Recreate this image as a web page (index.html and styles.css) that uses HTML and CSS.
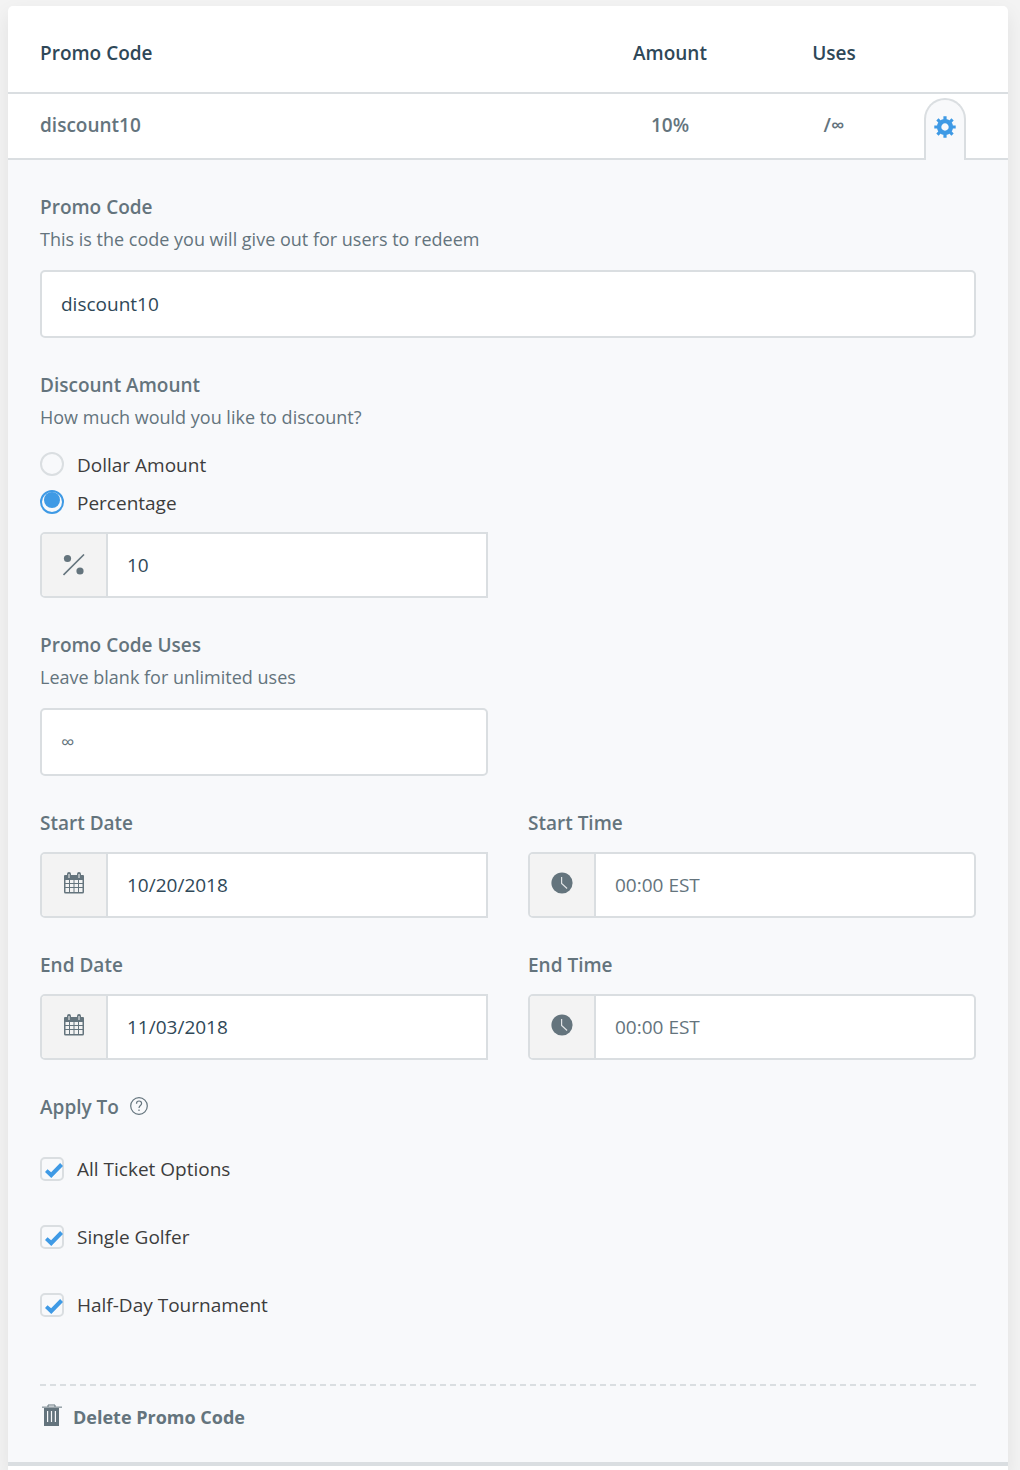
FILE: index.html
```html
<!DOCTYPE html>
<html lang="en">
<head>
    <meta charset="UTF-8">
    <meta name="viewport" content="width=device-width, initial-scale=1.0">
    <title>Promo Codes</title>
    <link rel="stylesheet" href="styles.css">
</head>
<body>
  <!-- Shared icons -->
  <svg class="sprite" aria-hidden="true">
    <symbol id="icon-calendar" viewBox="0 0 22 22">
      <path fill="currentColor" fill-rule="evenodd" d="M2 3h2v-1a2 2 0 0 1 4 0v1h6v-1a2 2 0 0 1 4 0v1h2a1 1 0 0 1 1 1v16a1.500 1.500 0 0 1-1.500 1.500h-17a1.500 1.500 0 0 1-1.500-1.500v-16a1 1 0 0 1 1-1zM5.500 2v4h1v-4zM15.500 2v4h1v-4zM2.500 8v3h3.500v-3zM7 8v3h3.500v-3zM11.500 8v3h3.500v-3zM16 8v3h3.500v-3zM2.500 12v3h3.500v-3zM7 12v3h3.500v-3zM11.500 12v3h3.500v-3zM16 12v3h3.500v-3zM2.500 16v4h3.500v-4zM7 16v4h3.500v-4zM11.500 16v4h3.500v-4zM16 16v4h3.500v-4z"/>
    </symbol>
    <symbol id="icon-clock" viewBox="0 0 22 22">
      <circle cx="11" cy="11" r="10.600" fill="currentColor"/>
      <path d="M10.600 5v6.500l5.500 5" fill="none" stroke="#dfe2e4" stroke-width="1.200"/>
    </symbol>
  </svg>

  <div class="card">
    <table class="promo-table">
      <thead>
        <tr>
          <th class="col-code" scope="col">Promo Code</th>
          <th class="col-amount" scope="col">Amount</th>
          <th class="col-uses" scope="col">Uses</th>
          <td class="col-edit"></td>
        </tr>
      </thead>
      <tbody>
        <tr>
          <td class="col-code">discount10</td>
          <td class="col-amount">10%</td>
          <td class="col-uses">/∞</td>
          <td class="col-edit">
            <button type="button" class="tab-btn" aria-label="Edit promo code" aria-expanded="true">
              <svg width="22" height="22" viewBox="-11 -11 22 22">
                <g stroke="currentColor" stroke-width="3.200">
                  <path d="M0-10.700V-6M0 6V10.700M-10.700 0H-6M6 0H10.700"/>
                  <path transform="rotate(45)" d="M0-10.700V-6M0 6V10.700M-10.700 0H-6M6 0H10.700"/>
                </g>
                <circle r="5.900" fill="none" stroke="currentColor" stroke-width="4.400"/>
              </svg>
            </button>
          </td>
        </tr>
      </tbody>
    </table>

    <form class="panel">
      <div class="field">
        <label class="title" for="code">Promo Code</label>
        <p class="hint">This is the code you will give out for users to redeem</p>
        <input class="text-input" type="text" id="code" value="discount10">
      </div>

      <div class="row">
        <div class="field">
          <label class="title" for="amount">Discount Amount</label>
          <p class="hint">How much would you like to discount?</p>
          <div class="radios">
            <label class="option"><input type="radio" name="type"> Dollar Amount</label>
            <label class="option"><input type="radio" name="type" checked> Percentage</label>
          </div>
          <div class="input-group square">
            <span class="addon">
              <svg width="22" height="22" viewBox="0 0 22 22">
                <circle cx="4.500" cy="4.500" r="3.600" fill="currentColor"/>
                <circle cx="17" cy="17" r="3.600" fill="currentColor"/>
                <path d="M.5 21L21 .5" stroke="currentColor" stroke-width="1.600"/>
              </svg>
            </span>
            <input type="text" id="amount" value="10">
          </div>
        </div>
      </div>

      <div class="row">
        <div class="field">
          <label class="title" for="uses">Promo Code Uses</label>
          <p class="hint">Leave blank for unlimited uses</p>
          <input class="text-input" type="text" id="uses" placeholder="∞">
        </div>
      </div>

      <div class="row">
        <div class="field">
          <label class="title" for="startDate">Start Date</label>
          <div class="input-group square">
            <span class="addon"><svg class="icon-up" width="22" height="22"><use href="#icon-calendar"/></svg></span>
            <input type="text" id="startDate" value="10/20/2018">
          </div>
        </div>
        <div class="field">
          <label class="title" for="startTime">Start Time</label>
          <div class="input-group">
            <span class="addon"><svg class="icon-up" width="22" height="22"><use href="#icon-clock"/></svg></span>
            <input type="text" id="startTime" placeholder="00:00 EST">
          </div>
        </div>
      </div>

      <div class="row">
        <div class="field">
          <label class="title" for="endDate">End Date</label>
          <div class="input-group square">
            <span class="addon"><svg class="icon-up" width="22" height="22"><use href="#icon-calendar"/></svg></span>
            <input type="text" id="endDate" value="11/03/2018">
          </div>
        </div>
        <div class="field">
          <label class="title" for="endTime">End Time</label>
          <div class="input-group">
            <span class="addon"><svg class="icon-up" width="22" height="22"><use href="#icon-clock"/></svg></span>
            <input type="text" id="endTime" placeholder="00:00 EST">
          </div>
        </div>
      </div>

      <fieldset class="apply">
        <legend class="title">Apply To
          <svg width="20" height="20" viewBox="0 0 20 20" fill="none" stroke="currentColor" stroke-width="1.200">
            <circle cx="10" cy="10" r="8.300"/>
            <path d="M7.500 7.800C7.500 6 8.500 5 10 5s2.600 1 2.600 2.400c0 2-2.600 2.300-2.600 4.700"/>
            <path d="M10 13.600v1.500"/>
          </svg>
        </legend>
        <label class="option"><input type="checkbox" checked> All Ticket Options</label>
        <label class="option"><input type="checkbox" checked> Single Golfer</label>
        <label class="option"><input type="checkbox" checked> Half-Day Tournament</label>
      </fieldset>

      <div class="actions">
        <button type="button" class="delete-btn">
          <svg width="22" height="22" viewBox="0 0 22 22">
            <path d="M8 3V1h7v2" fill="none" stroke="currentColor" stroke-width="1"/>
            <path d="M2 3.200h20" stroke="currentColor" stroke-width="1.400" opacity=".7"/>
            <path fill="currentColor" fill-rule="evenodd" d="M4 4h15v18H4zM7 7v11h1.200V7zM10.900 7v11h1.200V7zM14.800 7v11h1.200V7z"/>
          </svg>
          Delete Promo Code
        </button>
      </div>
    </form>
  </div>
</body>
</html>
```
FILE: styles.css
```css
* {
  box-sizing: border-box;
}

body {
  margin: 0;
  padding: 6px 12px 0 8px;
  background-color: #f3f3f3;
  font-family: 'Open Sans', sans-serif;
  font-size: 19px;
  line-height: 32px;
  color: #64747d;
}

input, button {
  font: inherit;
}

.sprite {
  display: none;
}

.card {
  background-color: #fff;
  border-radius: 5px 5px 0 0;
  padding-bottom: 4px;
  box-shadow: 0 8px 20px rgba(0, 0, 0, 0.08);
}

/* Table */
.promo-table {
  width: 100%;
  table-layout: fixed;
  border-collapse: separate;
  border-spacing: 0;
}

.promo-table th, .promo-table td {
  padding: 15px 0 17px;
  border-bottom: 2px solid #dadee1;
  font-weight: 600;
  text-align: center;
}

.promo-table thead th {
  padding: 31px 0 23px;
  color: #2f4858;
}

.promo-table .col-code {
  width: 58%;
  padding-left: 32px;
  text-align: left;
}

.col-amount, .col-uses {
  width: 16.4%;
}

.promo-table .col-edit {
  padding: 0 0 0 8px;
  vertical-align: bottom;
}

/* The open tab covers the border under the row */
.tab-btn {
  display: flex;
  align-items: center;
  justify-content: center;
  width: 42px;
  height: 62px;
  margin: 0 0 -2px;
  padding: 0 0 6px;
  border: 2px solid #dadee1;
  border-bottom: 0;
  border-radius: 21px 21px 0 0;
  background-color: #f8f9fb;
  color: #3f9ae5;
  cursor: pointer;
}

/* Edit panel */
.panel {
  display: flex;
  flex-direction: column;
  gap: 31px;
  padding: 31px 32px 29px;
  background-color: #f8f9fb;
  border-bottom: 4px solid #dadee1;
}

.row {
  display: grid;
  grid-template-columns: 1fr 1fr;
  gap: 40px;
}

.title {
  display: block;
  font-weight: 600;
}

.hint {
  margin: 0;
  font-size: 18px;
}

.text-input {
  display: block;
  width: 100%;
  height: 68px;
  margin-top: 15px;
  padding: 0 19px;
  border: 2px solid #dadee1;
  border-radius: 5px;
  background-color: #fff;
  color: #2f4858;
}

.input-group {
  display: flex;
  height: 66px;
  margin-top: 13px;
  border: 2px solid #dadee1;
  border-radius: 5px;
  background-color: #fff;
  overflow: hidden;
}

.input-group.square {
  border-radius: 5px 0 0 5px;
}

.input-group input {
  flex: 1;
  min-width: 0;
  padding: 0 19px;
  border: 0;
  background: none;
  color: #2f4858;
}

.addon {
  display: flex;
  align-items: center;
  justify-content: center;
  width: 66px;
  border-right: 2px solid #dadee1;
  background-color: #f3f3f3;
}

.icon-up {
  margin-bottom: 4px;
}

::placeholder {
  color: #64747d;
  opacity: 1;
}

/* Radios and checkboxes */
.radios {
  margin: 13px 0 10px;
}

.radios + .input-group {
  margin-top: 0;
}

.option {
  display: flex;
  align-items: center;
  gap: 13px;
  height: 38px;
  color: #3d3d3d;
}

.option input {
  appearance: none;
  position: relative;
  width: 24px;
  height: 24px;
  margin: 0;
  border: 2px solid #dadee1;
  border-radius: 5px;
}

.option input[type="radio"] {
  margin-bottom: 2px;
  border-radius: 50%;
}

.option input[type="radio"]:checked {
  border-color: #3f9ae5;
}

.option input:checked::before {
  content: "";
  position: absolute;
  background-color: #3f9ae5;
}

.option input[type="radio"]:checked::before {
  top: 0;
  left: 2px;
  width: 16px;
  height: 16px;
  border-radius: 50%;
}

.option input[type="checkbox"]:checked::before {
  top: 4px;
  left: 3px;
  width: 18px;
  height: 15px;
  clip-path: polygon(0 60%, 14% 42%, 34% 62%, 84% 0, 100% 20%, 35% 100%);
}

.apply {
  margin: 0;
  padding: 0;
  border: 0;
}

.apply .title {
  display: flex;
  align-items: center;
  gap: 10px;
  margin-bottom: 12px;
  padding: 0;
}

.apply .title svg {
  margin-bottom: 2px;
}

.apply .option {
  height: 68px;
}

/* Footer actions */
.actions {
  margin-top: 14px;
  padding-top: 15px;
  border-top: 2px dashed #dadee1;
}

.delete-btn {
  display: flex;
  align-items: center;
  gap: 11px;
  padding: 0;
  border: 0;
  background: none;
  color: #64747d;
  font-size: 18px;
  font-weight: 700;
  cursor: pointer;
}

.delete-btn svg {
  margin-bottom: 4px;
}
```
